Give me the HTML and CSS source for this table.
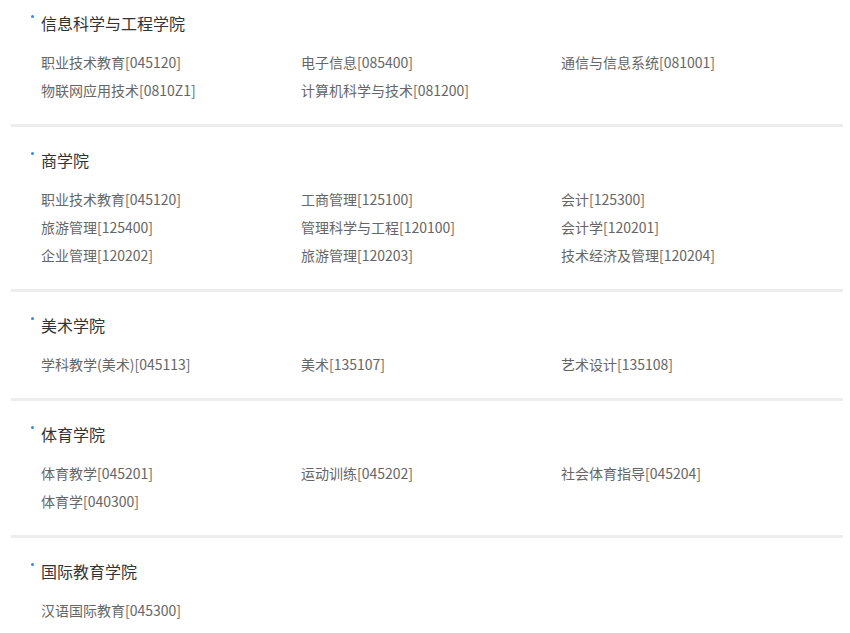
FILE: index.html
```html
<!DOCTYPE html>
<html lang="zh">
<head>
<meta charset="utf-8">
<link rel="stylesheet" href="styles.css">
</head>
<body>
<div class="list">
  <section class="college">
    <h3 class="title">信息科学与工程学院</h3>
    <ul class="majors">
      <li>职业技术教育[045120]</li>
      <li>电子信息[085400]</li>
      <li>通信与信息系统[081001]</li>
      <li>物联网应用技术[0810Z1]</li>
      <li>计算机科学与技术[081200]</li>
    </ul>
  </section>
  <section class="college">
    <h3 class="title">商学院</h3>
    <ul class="majors">
      <li>职业技术教育[045120]</li>
      <li>工商管理[125100]</li>
      <li>会计[125300]</li>
      <li>旅游管理[125400]</li>
      <li>管理科学与工程[120100]</li>
      <li>会计学[120201]</li>
      <li>企业管理[120202]</li>
      <li>旅游管理[120203]</li>
      <li>技术经济及管理[120204]</li>
    </ul>
  </section>
  <section class="college">
    <h3 class="title">美术学院</h3>
    <ul class="majors">
      <li>学科教学(美术)[045113]</li>
      <li>美术[135107]</li>
      <li>艺术设计[135108]</li>
    </ul>
  </section>
  <section class="college">
    <h3 class="title">体育学院</h3>
    <ul class="majors">
      <li>体育教学[045201]</li>
      <li>运动训练[045202]</li>
      <li>社会体育指导[045204]</li>
      <li>体育学[040300]</li>
    </ul>
  </section>
  <section class="college">
    <h3 class="title">国际教育学院</h3>
    <ul class="majors">
      <li>汉语国际教育[045300]</li>
    </ul>
  </section>
</div>
</body>
</html>
```
FILE: styles.css
```css
html, body {
  margin: 0;
  padding: 0;
  background: #fff;
}
body {
  font-family: "Noto Sans CJK SC", "Noto Sans", sans-serif;
  color: #333;
}
.list {
  margin: 0 7px 0 11px;
}
.college {
  padding: 22px 0 20px 30px;
  border-bottom: 3px solid #ededed;
}
.college:first-child {
  padding-top: 12px;
}
.college:last-child {
  border-bottom: none;
}
.title {
  position: relative;
  margin: 0;
  font-size: 16px;
  font-weight: normal;
  line-height: 22px;
  color: #333;
}
.title::before {
  content: "";
  position: absolute;
  left: -10px;
  top: 3px;
  width: 3px;
  height: 3px;
  border-radius: 50%;
  background: #2b8de8;
}
.majors {
  list-style: none;
  margin: 14px 0 0;
  padding: 0;
  display: grid;
  grid-template-columns: repeat(3, 260px);
}
.majors li {
  font-size: 14px;
  line-height: 28px;
  color: #666;
  white-space: nowrap;
}
```
